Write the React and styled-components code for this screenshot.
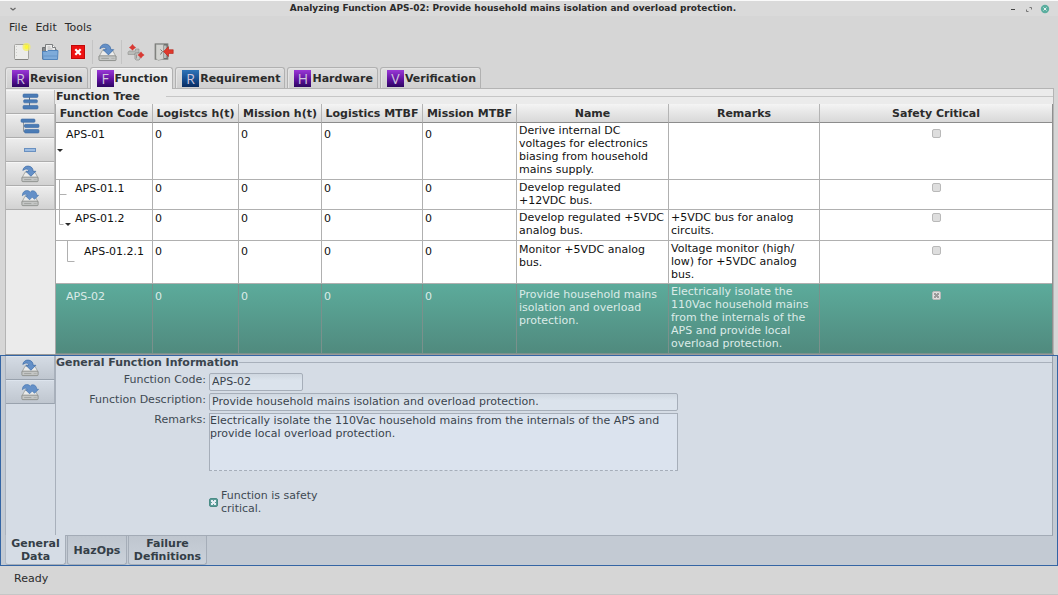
import React from 'react';
import styled, { createGlobalStyle, css } from 'styled-components';

const GlobalStyle = createGlobalStyle`
  * { box-sizing: border-box; }
  body { margin: 0; background: #d6d6d6; }
  body, button, input, textarea, table {
    font: 11px/13px "DejaVu Sans", sans-serif;
    color: #2b2b2b;
  }
  button { padding: 0; margin: 0; border: 0; background: none; }
  h1, h2 { margin: 0; font-size: 11px; line-height: 13px; }
  svg { display: block; flex: none; }
`;

/* ---------- window frame ---------- */

const Window = styled.div`
  min-height: 100vh;
  display: flex;
  flex-direction: column;
  border-top: 1px solid #fafafa;
`;

const TitleBar = styled.header`
  height: 15px;
  flex: none;
  display: flex;
  align-items: center;
  padding: 0 8px;
  background: #dadada;
`;

const Title = styled.h1`
  flex: 1;
  text-align: center;
  && { font-size: 9px; }
`;

const WindowControls = styled.div`
  display: flex;
  align-items: center;
  gap: 6px;
`;

const WindowButton = styled.button`
  width: 10px;
  height: 10px;
`;

const MenuBar = styled.nav`
  height: 21px;
  flex: none;
  display: flex;
  align-items: center;
  gap: 8px;
  padding: 2px 9px 0;
`;

const MenuButton = styled.button`
  height: 16px;
`;

const ToolBar = styled.div`
  height: 30px;
  flex: none;
  display: flex;
  align-items: center;
  padding: 0 8px;
`;

const ToolButton = styled.button`
  width: 28px;
  height: 28px;
  display: grid;
  place-items: center;
`;

const ToolSeparator = styled.i`
  width: 1px;
  height: 24px;
  background: #c4c4c4;
`;

/* ---------- upper notebook ---------- */

const TabStrip = styled.div`
  height: 21px;
  flex: none;
  display: flex;
  gap: 2px;
  padding: 0 5px;
`;

const ModuleTab = styled.button`
  display: flex;
  align-items: center;
  padding: 0 4px 0 6px;
  font-weight: bold;
  border: 1px solid #b1b1b1;
  border-bottom: 0;
  border-radius: 3px 3px 0 0;
  background: linear-gradient(#dedede, #d0d0d0);
  box-shadow: inset 1px 1px #e4e4e4;
  ${(p) => p.$active && css`
    background: #ebebeb;
    margin-bottom: -1px;
    z-index: 1;
    box-shadow: inset 1px 1px #f6f6f6;
  `}
`;

const Letter = styled.span`
  width: 17px;
  height: 17px;
  margin-right: 1px;
  font: 14px/17px "Open Sans", "DejaVu Sans", sans-serif;
  text-align: center;
  color: #d0c6dc;
  background: ${(p) => (p.$blue
    ? 'linear-gradient(#2f74b8, #14498a 60%, #0a2c60)'
    : 'linear-gradient(#9a38d6, #5b0f9a 60%, #2c0660)')};
`;

const Notebook = styled.section`
  display: flex;
  flex: none;
  margin: 0 4px 0 5px;
  padding-top: 1px;
  border: 1px solid #b4b4b4;
  border-bottom: 0;
  background: #ebebeb;
`;

const SideBar = styled.div`
  width: 49px;
  flex: none;
  display: flex;
  flex-direction: column;
`;

const SideButton = styled.button`
  height: 24px;
  display: grid;
  place-items: center;
  border-bottom: 1px solid ${(p) => (p.$tinted ? '#99a2ad' : '#adadad')};
  border-right: 1px solid ${(p) => (p.$tinted ? '#a8b0bb' : '#bdbdbd')};
  background: ${(p) => (p.$tinted
    ? 'linear-gradient(#d5dce5, #bfc6cf)'
    : 'linear-gradient(#eeeeee, #d2d2d2)')};
  box-shadow: inset 0 1px ${(p) => (p.$tinted ? '#dde4ed' : '#f6f6f6')};
`;

const Frame = styled.div`
  flex: 1;
  min-width: 0;
  display: flex;
  flex-direction: column;
`;

const FrameHeading = styled.div`
  height: 14px;
  flex: none;
  display: flex;
  align-items: center;
  padding-bottom: 2px;
  gap: ${(p) => p.$gap};
  padding-left: ${(p) => p.$inset};
  &::after {
    content: "";
    flex: 1;
    height: 1px;
    background: ${(p) => p.$line};
  }
`;

/* ---------- function tree ---------- */

const Tree = styled.table`
  width: 100%;
  table-layout: fixed;
  border-collapse: separate;
  border-spacing: 0;
  border-left: 1px solid #a8a8a8;
  border-right: 1px solid #8f8f8f;
  background: #ffffff;
`;

const HeadCell = styled.th`
  height: 19px;
  padding: 0;
  text-align: center;
  white-space: nowrap;
  border-right: 1px solid #b4b4b4;
  border-bottom: 1px solid #8c8c8c;
  background: linear-gradient(#f4f4f4, #d8d8d8);
  &:last-child { border-right: 0; }
`;

const Row = styled.tr`
  height: ${(p) => p.$height}px;
  color: ${(p) => (p.$selected ? '#dcebe8' : '#111111')};
  td {
    border-color: ${(p) => (p.$selected ? '#7a918c' : '#b0b0b0')};
    ${(p) => p.$selected && 'background: linear-gradient(#5cab9b, #508a7e);'}
  }
`;

const Cell = styled.td`
  position: relative;
  vertical-align: top;
  color: inherit;
  white-space: pre-line;
  padding: ${(p) => p.$top}px 2px 0 ${(p) => p.$indent || 2}px;
  text-align: ${(p) => (p.$center ? 'center' : 'left')};
  border-right: 1px solid;
  border-bottom: 1px solid;
  &:last-child { border-right: 0; }
`;

const Branch = styled.svg`
  position: absolute;
  left: 0;
  top: 0;
`;

const Check = styled.input`
  appearance: none;
  display: inline-block;
  vertical-align: top;
  flex: none;
  width: 9px;
  height: 9px;
  margin: 0;
  border: 1px solid ${(p) => (p.$teal ? '#4a8c86' : '#b9b9b9')};
  border-radius: 2px;
  background: ${(p) => (p.$teal ? '#5c9c98' : '#dedede')};
  &:checked::after {
    content: "";
    display: block;
    width: 5px;
    height: 5px;
    margin: 1px;
    background:
      linear-gradient(45deg, transparent 38%, currentColor 38% 62%, transparent 62%),
      linear-gradient(135deg, transparent 38%, currentColor 38% 62%, transparent 62%);
    color: ${(p) => (p.$teal ? '#e6eef4' : '#9a9a9a')};
  }
`;

/* ---------- lower notebook ---------- */

const DetailPane = styled.section`
  flex: 1;
  display: flex;
  flex-direction: column;
  padding: 0 4px;
  border: 1px solid #3465a4;
  background: #c3cad3;
`;

const Splitter = styled.div`
  height: 1px;
  flex: none;
  margin: 0 4px 0 5px;
  background: #999999;
`;

const DetailBody = styled.div`
  flex: 1;
  display: flex;
  border-left: 1px solid #abb3be;
  background: #d5dce5;
`;

const DetailFrame = styled(Frame)`
  color: #3a444d;
  border-right: 1px solid #9aa2ad;
  border-bottom: 1px solid #a3abb6;
  border-left: 1px solid #a8b0bb;
`;

const Form = styled.form`
  flex: 1;
  display: grid;
  grid-template-columns: 150px minmax(0, 469px);
  grid-template-rows: 18px 18px 58px auto;
  column-gap: 3px;
  row-gap: 2px;
  padding-top: 3px;
`;

const FieldLabel = styled.label`
  text-align: right;
  color: #3f4a53;
`;

const field = css`
  color: #3a444d;
  border: 1px solid #a6aeb9;
  border-radius: 2px;
  background: linear-gradient(#cfd7e0, #dbe3ec 40%);
`;

const TextField = styled.input`
  ${field}
  width: ${(p) => p.$width};
  height: 18px;
  padding: 0 2px 1px;
`;

const TextBox = styled.textarea`
  ${field}
  width: 100%;
  height: 58px;
  padding: 0;
  border-radius: 0;
  border-bottom-style: dashed;
  resize: none;
  background: #dbe3ee;
`;

const CheckLabel = styled.label`
  grid-column: 2;
  width: 120px;
  display: flex;
  align-items: center;
  align-self: start;
  gap: 3px;
  padding-top: 16px;
  color: #3f4a53;
`;

const DetailTabs = styled.div`
  height: 29px;
  flex: none;
  display: flex;
  gap: 1px;
`;

const DetailTab = styled.button`
  width: ${(p) => p.$width};
  font-weight: bold;
  color: #343e47;
  border: 1px solid #a5adb8;
  border-top: 0;
  border-radius: 0 0 3px 3px;
  background: linear-gradient(#bfc6cf, #cad1da);
  ${(p) => p.$active && css`
    background: #d5dce5;
    margin-top: -1px;
    padding-top: 1px;
    border-left-color: #b4bcc6;
  `}
`;

const StatusBar = styled.footer`
  height: 29px;
  flex: none;
  display: flex;
  align-items: center;
  padding: 0 14px 4px;
  border-bottom: 1px solid #c6c6c6;
`;

/* ---------- icons ---------- */

const NewIcon = () => (
  <svg width="18" height="18" viewBox="0 0 18 18">
    <rect x="1.500" y="1.500" width="14" height="15" rx="1" fill="#ececea" stroke="#a3a3a0" />
    <path d="M3.500 3v12" stroke="#cfcfcc" strokeDasharray="1 2" />
    <path d="M2 16.500h13" stroke="#858582" />
    <circle cx="13.500" cy="4" r="4" fill="#f6f05a" opacity=".75" />
    <circle cx="13.500" cy="4" r="2" fill="#fdf735" />
  </svg>
);

const OpenIcon = () => (
  <svg width="18" height="18" viewBox="0 0 18 18">
    <path d="M1.500 16V4.500h4L6 6h9v9z" fill="#85888b" stroke="#6b6e70" />
    <path d="M4.500 9V1.500h7l3 3V9z" fill="#ececec" stroke="#7c7f80" />
    <path d="M11.500 1.500v3h3" fill="#fff" stroke="#7c7f80" />
    <path d="M6.500 4h3M6.500 6h5" stroke="#b5b5b5" />
    <path d="M1.500 8.500h4.500l1-1h10l-.5 9H2z" fill="#7eabda" stroke="#5285bd" strokeLinejoin="round" />
    <path d="M2.500 13h13.500" stroke="#6795c8" />
  </svg>
);

const DeleteIcon = () => (
  <svg width="16" height="16" viewBox="0 0 16 16">
    <rect x=".5" y=".5" width="15" height="15" fill="#e8d5d5" />
    <rect x="1.500" y="1.500" width="13" height="13" fill="#ee1111" stroke="#c00808" />
    <path d="M5.300 5.300l5.400 5.400M10.700 5.300l-5.400 5.400" stroke="#fff" strokeWidth="2.200" />
  </svg>
);

const SaveIcon = ({ all, small }) => (
  <svg width={small ? 18 : 19} height={small ? 18 : 19} viewBox="0 0 20 20">
    <path d="M4.500 8h11l3.500 6.500H1z" fill="#ebebea" stroke="#9b9d9a" strokeLinejoin="round" strokeWidth=".9" />
    <rect x="1" y="13.500" width="18" height="5" rx="1" fill="#c4c6c5" stroke="#868885" strokeWidth=".9" />
    <path d="M3.500 16.200h8" stroke="#9d9f9c" />
    <path d="M14 16.200h3.500" stroke="#aeb0ad" />
    {all ? (
      <path
        d="M1.500 7.500C1.500 4 3.500 1.800 6.500 1.800c1.800 0 3 .7 3.800 1.700C11.200 2.300 12.300 1.800 13.500 2c2.600.4 4 2.500 4 5H19.500L15 11.500 12.500 9l-3 3L5 7.500h2C6.500 5.500 4 5 1.500 7.500z"
        fill="#6490c8" stroke="#4272ae" strokeWidth=".7" strokeLinejoin="round"
      />
    ) : (
      <path
        d="M2 6C2.500 3 5 1 8 1.200c3.500.2 5.500 2.600 5.500 5.800H16.500L11 12.500 5.500 7H8.500C8.500 4.500 6 3.500 2 6z"
        fill="#6490c8" stroke="#3a6aa6" strokeWidth=".8" strokeLinejoin="round"
      />
    )}
  </svg>
);

const ConnectIcon = () => (
  <svg width="18" height="18" viewBox="0 0 18 18">
    <path d="M1 9.500l1-1.500h6.500V6H12v4h-2v1.500H1z" fill="#b9bbb8" stroke="#8e908d" strokeWidth=".6" />
    <path d="M8 10h5v6l-1 1H9.500L8 16z" fill="#c9cac8" stroke="#858784" strokeWidth=".7" />
    <path d="M9.500 11.500v4" stroke="#969895" />
    <path
      d="M5.500 1l1.500 2 2 1.500L7 6 5.500 7.500 4 6 2 4.500 4 3zM14 8.500l1.500 2 2 1.500-2 1.500-1.500 2-1.500-2-2-1.500 2-1.500z"
      fill="#d83a34"
    />
  </svg>
);

const ExitIcon = () => (
  <svg width="20" height="18" viewBox="0 0 20 18">
    <rect x="1" y=".8" width="13" height="15.500" fill="#6b6d6a" stroke="#858784" strokeWidth=".8" />
    <rect x="10" y="2.500" width="2.500" height="12.500" fill="#bcbdbb" />
    <path d="M2 1.500h7.500V16L4 17.500 2 15.500z" fill="#d3d4d1" stroke="#9b9d9a" strokeWidth=".6" />
    <path d="M6.500 6.500l2 2-2 3" stroke="#71736f" fill="none" />
    <path d="M9.500 8.500l5-4.800v3h4.700v3.800h-4.700v3z" fill="#e0392c" stroke="#b3231a" strokeWidth=".6" strokeLinejoin="round" />
  </svg>
);

const bar = { rx: 1, fill: '#4a7bb5', stroke: '#3b6aa5', strokeWidth: 0.6 };

const SiblingIcon = () => (
  <svg width="17" height="17" viewBox="0 0 17 17">
    <path d="M7.500 4v9" stroke="#66717d" />
    <rect x="1" y="1" width="15" height="3.400" {...bar} />
    <rect x="1.600" y="6.800" width="13.800" height="3" {...bar} />
    <rect x="1" y="12.500" width="15" height="3.500" {...bar} />
  </svg>
);

const ChildIcon = () => (
  <svg width="20" height="16" viewBox="0 0 20 16">
    <path d="M3.500 4v9.500h2M3.500 8h2" stroke="#8b949d" fill="none" />
    <rect x="1" y="1" width="14" height="3.300" {...bar} />
    <rect x="4.500" y="6.300" width="14.500" height="3.200" {...bar} />
    <rect x="4.500" y="11.500" width="14.500" height="3.500" {...bar} />
  </svg>
);

const RemoveIcon = () => (
  <svg width="14" height="6" viewBox="0 0 14 6">
    <rect x="1.500" y="1.500" width="11" height="3" fill="#9dbde3" stroke="#6990c0" />
  </svg>
);

const branches = {
  root: <path d="M1 26h6l-3 3z" fill="#2b2b2b" />,
  middle: <path d="M3.500 0v32M3.500 14.500h7" stroke="#b0b0b0" fill="none" />,
  last: (
    <>
      <path d="M3.500 0v14.500h4" stroke="#b0b0b0" fill="none" />
      <path d="M9 13h6l-3 3z" fill="#2b2b2b" />
    </>
  ),
  leaf: <path d="M11.500 0v20.500h7" stroke="#b0b0b0" fill="none" />,
};

/* ---------- data ---------- */

const columns = [
  ['Function Code', 97],
  ['Logistcs h(t)', 86],
  ['Mission h(t)', 83],
  ['Logistics MTBF', 101],
  ['Mission MTBF', 94],
  ['Name', 152],
  ['Remarks', 151],
  ['Safety Critical', null],
];

const functions = [
  {
    code: 'APS-01', indent: 10, branch: 'root', height: 57, lines: 4,
    name: 'Derive internal DC voltages for electronics biasing from household mains supply.', nameLines: 4,
    remarks: '', remarkLines: 1,
  },
  {
    code: 'APS-01.1', indent: 19, branch: 'middle', height: 30, lines: 2,
    name: 'Develop regulated +12VDC bus.', nameLines: 2, remarks: '', remarkLines: 1,
  },
  {
    code: 'APS-01.2', indent: 19, branch: 'last', height: 31, lines: 2,
    name: 'Develop regulated +5VDC analog bus.', nameLines: 2,
    remarks: '+5VDC bus for analog circuits.', remarkLines: 2,
  },
  {
    code: 'APS-01.2.1', indent: 28, branch: 'leaf', height: 43, lines: 3,
    name: 'Monitor +5VDC analog bus.', nameLines: 2,
    remarks: 'Voltage monitor (high/\nlow) for +5VDC analog bus.', remarkLines: 3,
  },
  {
    code: 'APS-02', indent: 10, height: 70, lines: 5, selected: true,
    name: 'Provide household mains isolation and overload protection.', nameLines: 3,
    remarks: 'Electrically isolate the 110Vac household mains from the internals of the APS and provide local overload protection.',
    remarkLines: 5,
  },
];

// Text sits a tenth of the way down the spare height of its row.
const topPad = (row, lines) => 1 + Math.round((row.lines - lines) * 1.3);

const modules = [
  ['R', 'Revision'],
  ['F', 'Function'],
  ['R', 'Requirement', true],
  ['H', 'Hardware'],
  ['V', 'Verification'],
];

function FunctionRow({ row }) {
  const single = topPad(row, 1);
  return (
    <Row $height={row.height} $selected={row.selected}>
      <Cell $top={single} $indent={row.indent}>
        {row.branch && <Branch width="24" height="30">{branches[row.branch]}</Branch>}
        {row.code}
      </Cell>
      {[1, 2, 3, 4].map((n) => <Cell key={n} $top={single}>0</Cell>)}
      <Cell $top={topPad(row, row.nameLines)}>{row.name}</Cell>
      <Cell $top={topPad(row, row.remarkLines)}>{row.remarks}</Cell>
      <Cell $top={single + 1} $center>
        <Check type="checkbox" aria-label={`${row.code} safety critical`} defaultChecked={row.selected} />
      </Cell>
    </Row>
  );
}

export default function App() {
  return (
    <>
      <GlobalStyle />
      <Window>
        <TitleBar>
          <WindowButton aria-label="Window menu">
            <svg width="10" height="10"><path d="M2.500 4l2.500 2 2.500-2" fill="none" stroke="#666" strokeWidth="1.300" /></svg>
          </WindowButton>
          <Title>Analyzing Function APS-02: Provide household mains isolation and overload protection.</Title>
          <WindowControls>
            <WindowButton aria-label="Minimize">
              <svg width="10" height="10"><path d="M3 5.500h4" stroke="#444" /></svg>
            </WindowButton>
            <WindowButton aria-label="Maximize">
              <svg width="10" height="10"><path d="M5.500 3.500h2v2M4.500 7.500h-2v-2" fill="none" stroke="#777" /></svg>
            </WindowButton>
            <WindowButton aria-label="Close">
              <svg width="10" height="10">
                <circle cx="5" cy="5" r="4.200" fill="#5bae9f" />
                <path d="M3.500 3.500l3 3M6.500 3.500l-3 3" stroke="#e8f4f1" />
              </svg>
            </WindowButton>
          </WindowControls>
        </TitleBar>
        <MenuBar>
          <MenuButton>File</MenuButton>
          <MenuButton>Edit</MenuButton>
          <MenuButton>Tools</MenuButton>
        </MenuBar>
        <ToolBar>
          <ToolButton aria-label="New"><NewIcon /></ToolButton>
          <ToolButton aria-label="Open"><OpenIcon /></ToolButton>
          <ToolButton aria-label="Delete"><DeleteIcon /></ToolButton>
          <ToolSeparator />
          <ToolButton aria-label="Save"><SaveIcon /></ToolButton>
          <ToolSeparator />
          <ToolButton aria-label="Connect"><ConnectIcon /></ToolButton>
          <ToolButton aria-label="Quit"><ExitIcon /></ToolButton>
        </ToolBar>
        <TabStrip role="tablist">
          {modules.map(([letter, label, blue]) => (
            <ModuleTab key={label} role="tab" $active={label === 'Function'}>
              <Letter $blue={blue}>{letter}</Letter>
              {label}
            </ModuleTab>
          ))}
        </TabStrip>
        <Notebook>
          <SideBar>
            <SideButton aria-label="Add sibling function"><SiblingIcon /></SideButton>
            <SideButton aria-label="Add child function"><ChildIcon /></SideButton>
            <SideButton aria-label="Remove function"><RemoveIcon /></SideButton>
            <SideButton aria-label="Save function"><SaveIcon small /></SideButton>
            <SideButton aria-label="Save all functions"><SaveIcon small all /></SideButton>
          </SideBar>
          <Frame>
            <FrameHeading $gap="26px" $inset="1px" $line="#c6c6c6"><h2>Function Tree</h2></FrameHeading>
            <Tree>
              <colgroup>
                {columns.map(([name, width]) => <col key={name} width={width || undefined} />)}
              </colgroup>
              <thead>
                <tr>{columns.map(([name]) => <HeadCell key={name}>{name}</HeadCell>)}</tr>
              </thead>
              <tbody>
                {functions.map((row) => <FunctionRow key={row.code} row={row} />)}
              </tbody>
            </Tree>
          </Frame>
        </Notebook>
        <Splitter />
        <DetailPane>
          <DetailBody>
            <SideBar>
              <SideButton $tinted aria-label="Save function"><SaveIcon small /></SideButton>
              <SideButton $tinted aria-label="Save all functions"><SaveIcon small all /></SideButton>
            </SideBar>
            <DetailFrame>
              <FrameHeading $gap="0px" $inset="0px" $line="#a8b0bb"><h2>General Function Information</h2></FrameHeading>
              <Form>
                <FieldLabel htmlFor="code">Function Code:</FieldLabel>
                <TextField id="code" $width="94px" defaultValue="APS-02" />
                <FieldLabel htmlFor="description">Function Description:</FieldLabel>
                <TextField id="description" $width="100%" defaultValue="Provide household mains isolation and overload protection." />
                <FieldLabel htmlFor="remarks">Remarks:</FieldLabel>
                <TextBox
                  id="remarks"
                  defaultValue="Electrically isolate the 110Vac household mains from the internals of the APS and provide local overload protection."
                />
                <CheckLabel>
                  <Check type="checkbox" $teal defaultChecked />
                  Function is safety critical.
                </CheckLabel>
              </Form>
            </DetailFrame>
          </DetailBody>
          <DetailTabs role="tablist">
            <DetailTab role="tab" $width="61px" $active>General Data</DetailTab>
            <DetailTab role="tab" $width="60px">HazOps</DetailTab>
            <DetailTab role="tab" $width="79px">Failure Definitions</DetailTab>
          </DetailTabs>
        </DetailPane>
        <StatusBar>Ready</StatusBar>
      </Window>
    </>
  );
}
